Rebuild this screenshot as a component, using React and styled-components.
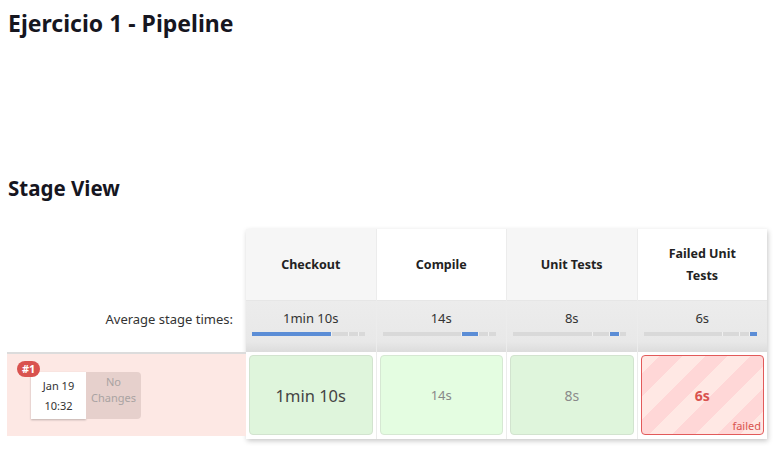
import React from 'react';
import styled, { createGlobalStyle, css } from 'styled-components';

const GlobalStyle = createGlobalStyle`
  html, body {
    margin: 0;
    padding: 0;
    background: #ffffff;
  }
  body {
    font-family: "Noto Sans", "Open Sans", sans-serif;
    color: #333;
  }
`;

const stages = [
  { name: 'Checkout', avg: '1min 10s', secs: 70, run: '1min 10s', kind: 'big' },
  { name: 'Compile', avg: '14s', secs: 14, run: '14s', kind: 'light' },
  { name: 'Unit Tests', avg: '8s', secs: 8, run: '8s', kind: 'mid' },
  { name: 'Failed Unit Tests', avg: '6s', secs: 6, run: '6s', kind: 'failed' },
];

const total = stages.reduce((s, x) => s + x.secs, 0);

function App() {
  return (
    <Page>
      <GlobalStyle />
      <Title>Ejercicio 1 - Pipeline</Title>
      <SubTitle>Stage View</SubTitle>
      <StageView>
        <LeftCol>
          <HeaderSpacer />
          <AvgLabel>Average stage times:</AvgLabel>
          <BuildRow>
            <Badge>#1</Badge>
            <DateBox>
              <span>Jan 19</span>
              <span>10:32</span>
            </DateBox>
            <ChangesBox>No<br />Changes</ChangesBox>
          </BuildRow>
        </LeftCol>
        <StageTable>
          {stages.map((st, i) => (
            <StageCol key={st.name}>
              <HeaderCell $alt={i % 2 === 0}>{st.name === 'Failed Unit Tests' ? <>Failed Unit<br />Tests</> : st.name}</HeaderCell>
              <AvgCell>
                <span>{st.avg}</span>
                <Bar>
                  {stages.map((seg, j) => (
                    <Segment key={seg.name} $on={i === j} style={{ flexGrow: seg.secs / total }} />
                  ))}
                </Bar>
              </AvgCell>
              <RunCell>
                <RunBox $kind={st.kind}>
                  {st.run}
                  {st.kind === 'failed' && <FailedTag>failed</FailedTag>}
                </RunBox>
              </RunCell>
            </StageCol>
          ))}
        </StageTable>
      </StageView>
    </Page>
  );
}

export default App;

const Page = styled.div`
  padding: 8px 8px 20px 7px;
`;

const Title = styled.h1`
  font-size: 23px;
  font-weight: 700;
  color: #16161f;
  margin: 0 0 0 1px;
  line-height: 30px;
`;

const SubTitle = styled.h2`
  font-size: 20.5px;
  font-weight: 700;
  color: #16161f;
  margin: 137px 0 0 1px;
  line-height: 26px;
`;

const StageView = styled.div`
  display: flex;
  margin-top: 28px;
`;

const LeftCol = styled.div`
  width: 239px;
  display: flex;
  flex-direction: column;
`;

const HeaderSpacer = styled.div`
  height: 72px;
`;

const AvgLabel = styled.div`
  height: 51px;
  text-align: right;
  padding: 9px 13px 0 0;
  box-sizing: border-box;
  font-size: 13px;
  line-height: 18px;
  color: #333;
`;

const BuildRow = styled.div`
  position: relative;
  height: 84px;
  background: #fde8e4;
  border-top: 2px solid #dcdcdc;
  display: flex;
  align-items: flex-start;
  padding: 18px 0 0 24px;
  box-sizing: border-box;
`;

const Badge = styled.span`
  position: absolute;
  left: 10px;
  top: 7px;
  background: #d9534f;
  color: #fff;
  font-size: 11px;
  font-weight: 700;
  border-radius: 8px;
  padding: 0 5px;
  line-height: 16px;
  z-index: 1;
`;

const DateBox = styled.div`
  width: 55px;
  height: 47px;
  background: #fff;
  box-shadow: 0 1px 2px rgba(0, 0, 0, 0.25);
  display: flex;
  flex-direction: column;
  align-items: center;
  justify-content: space-around;
  font-size: 11px;
  color: #333;
  padding: 3px 0;
  box-sizing: border-box;
`;

const ChangesBox = styled.div`
  width: 55px;
  height: 47px;
  background: #e6d0cc;
  border-radius: 0 4px 4px 0;
  color: #a9a3a2;
  font-size: 11px;
  text-align: center;
  line-height: 16px;
  padding-top: 2px;
  box-sizing: border-box;
`;

const StageTable = styled.div`
  display: flex;
  gap: 1px;
  background: #ececec;
  box-shadow: 1px 2px 5px rgba(0, 0, 0, 0.22);
`;

const StageCol = styled.div`
  width: 129.5px;
  display: flex;
  flex-direction: column;
  background: #f2f2f2;
`;

const HeaderCell = styled.div`
  height: 71px;
  display: flex;
  align-items: center;
  justify-content: center;
  text-align: center;
  font-size: 12.5px;
  font-weight: 700;
  color: #222;
  line-height: 22px;
  background: ${p => (p.$alt ? '#f6f6f6' : '#ffffff')};
  border-bottom: 1px solid #e6e6e6;
`;

const AvgCell = styled.div`
  height: 51px;
  display: flex;
  flex-direction: column;
  align-items: center;
  padding-top: 8px;
  box-sizing: border-box;
  font-size: 13px;
  color: #333;
  background: linear-gradient(#ececec, #e8e8e8 80%, #dcdcdc);
  line-height: 18px;
`;

const Bar = styled.div`
  display: flex;
  width: 113px;
  height: 4px;
  margin-top: 5px;
  margin-left: -4px;
  gap: 1px;
  background: #f0f0f0;
`;

const Segment = styled.div`
  flex-basis: 0;
  background: ${p => (p.$on ? '#5b8dd6' : '#d9d9d9')};
`;

const RunCell = styled.div`
  height: 87px;
  padding: 3px 3px 4px 3px;
  box-sizing: border-box;
  background: #fff;
`;

const kinds = {
  big: css`
    background: #dff5dc;
    border: 1px solid #d2e3cf;
    font-size: 16.5px;
    color: #444;
  `,
  light: css`
    background: #e4fde1;
    border: 1px solid #d6e8d3;
    font-size: 13px;
    color: #888;
  `,
  mid: css`
    background: #dff5dc;
    border: 1px solid #d2e3cf;
    font-size: 14px;
    color: #8a8a8a;
  `,
  failed: css`
    background: repeating-linear-gradient(
      -45deg,
      #ffe8e4 0px,
      #ffe8e4 16px,
      #ffd7d7 16px,
      #ffd7d7 32px
    );
    border: 1px solid #e25a5a;
    font-size: 14px;
    font-weight: 700;
    color: #d9534f;
  `,
};

const RunBox = styled.div`
  position: relative;
  height: 100%;
  box-sizing: border-box;
  border-radius: 4px;
  display: flex;
  align-items: center;
  justify-content: center;
  ${p => kinds[p.$kind]}
`;

const FailedTag = styled.span`
  position: absolute;
  right: 2px;
  bottom: 1px;
  font-size: 11px;
  font-weight: 400;
  color: #d9534f;
`;
